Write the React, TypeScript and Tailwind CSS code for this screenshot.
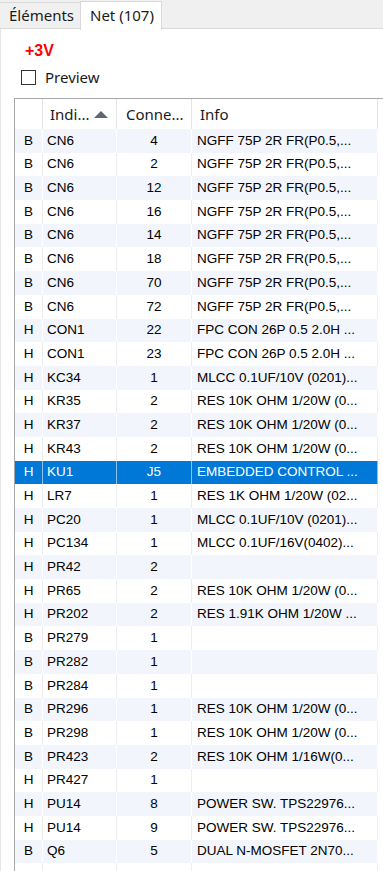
import React from "react";

type Row = [string, string, string, string];

const NGFF = "NGFF 75P 2R FR(P0.5,...";
const FPC = "FPC CON 26P 0.5 2.0H ...";
const RES10 = "RES 10K OHM 1/20W (0...";

const rows: Row[] = [
  ["B", "CN6", "4", NGFF],
  ["B", "CN6", "2", NGFF],
  ["B", "CN6", "12", NGFF],
  ["B", "CN6", "16", NGFF],
  ["B", "CN6", "14", NGFF],
  ["B", "CN6", "18", NGFF],
  ["B", "CN6", "70", NGFF],
  ["B", "CN6", "72", NGFF],
  ["H", "CON1", "22", FPC],
  ["H", "CON1", "23", FPC],
  ["H", "KC34", "1", "MLCC 0.1UF/10V (0201)..."],
  ["H", "KR35", "2", RES10],
  ["H", "KR37", "2", RES10],
  ["H", "KR43", "2", RES10],
  ["H", "KU1", "J5", "EMBEDDED CONTROL ..."],
  ["H", "LR7", "1", "RES 1K OHM 1/20W (02..."],
  ["H", "PC20", "1", "MLCC 0.1UF/10V (0201)..."],
  ["H", "PC134", "1", "MLCC 0.1UF/16V(0402)..."],
  ["H", "PR42", "2", ""],
  ["H", "PR65", "2", RES10],
  ["H", "PR202", "2", "RES 1.91K OHM 1/20W ..."],
  ["B", "PR279", "1", ""],
  ["B", "PR282", "1", ""],
  ["B", "PR284", "1", ""],
  ["B", "PR296", "1", RES10],
  ["B", "PR298", "1", RES10],
  ["B", "PR423", "2", "RES 10K OHM 1/16W(0..."],
  ["H", "PR427", "1", ""],
  ["H", "PU14", "8", "POWER SW. TPS22976..."],
  ["H", "PU14", "9", "POWER SW. TPS22976..."],
  ["B", "Q6", "5", "DUAL N-MOSFET 2N70..."],
  ["", "", "", ""],
];

const ui = { fontFamily: '"Noto Sans", sans-serif' };
const body = { fontFamily: '"Liberation Sans", Arial, sans-serif' };

export default function App() {
  return (
    <div className="w-[383px] h-[871px] overflow-hidden bg-white relative" style={ui}>
      {/* Tab strip */}
      <div className="h-[29px] bg-[#f0f0f0] border-b border-[#d9d9d9] flex items-end relative">
        <div className="h-[26px] w-[81px] border-t border-r border-[#d9d9d9] bg-[#f0f0f0] flex items-center pl-[9px] text-[15px] text-[#1a1a1a] leading-none">
          Éléments
        </div>
        <div className="absolute left-[80px] top-[1px] h-[29px] w-[82px] bg-white border-l border-r border-t border-[#d9d9d9] flex items-start pt-[4px] pl-[9px] text-[15px] text-[#1a1a1a] leading-[18px]">
          Net (107)
        </div>
      </div>

      {/* Content */}
      <div className="border-l border-[#e6e6e6] h-full">
        <div className="pl-[24px] pt-[13px] text-[16px] font-bold text-[#ff0000] leading-[17px]" style={body}>
          +3V
        </div>
        <div className="flex items-center pl-[20px] mt-[9px] h-[18px]">
          <div className="w-[15px] h-[15px] border border-[#333333] bg-white" />
          <span className="ml-[9px] text-[15px] text-[#1a1a1a] leading-[18px]">Preview</span>
        </div>

        {/* Table */}
        <div className="ml-[13px] mt-[12px] border-l border-t border-[#a8a8a8] w-[400px]">
          {/* Header */}
          <div className="flex h-[30px] bg-white text-[15px] text-[#1a1a1a]">
            <div className="w-[28px] border-r border-[#e5e5e5]" />
            <div className="w-[74px] border-r border-[#e5e5e5] flex items-center justify-between pl-[7px] pr-[8px]">
              <span>Indi...</span>
              <svg width="14" height="7" viewBox="0 0 14 7">
                <polygon points="0,7 7,0 14,7" fill="#5f6772" />
              </svg>
            </div>
            <div className="w-[75px] border-r border-[#e5e5e5] flex items-center pl-[9px]">Conne...</div>
            <div className="w-[186px] border-r border-[#e5e5e5] flex items-center pl-[8px]">Info</div>
            <div className="flex-1" />
          </div>

          {/* Rows */}
          <div style={body} className="text-[13.5px]">
            {rows.map((r, i) => {
              const selected = r[1] === "KU1";
              const striped = i % 2 === 0;
              const bg = selected ? "bg-[#0078d7] text-white" : striped ? "bg-[#f2f5fb] text-black" : "bg-white text-black";
              const line = selected ? "border-[#8fc0ea]" : striped ? "border-white" : "border-[#ededed]";
              return (
                <div key={i} className="flex h-[23.7px]">
                  <div className={`w-[28px] border-r ${line} ${bg} flex items-center justify-center`}>{r[0]}</div>
                  <div className={`w-[74px] border-r ${line} ${bg} flex items-center pl-[4px]`}>{r[1]}</div>
                  <div className={`w-[75px] border-r ${line} ${bg} flex items-center justify-center`}>{r[2]}</div>
                  <div className={`w-[186px] border-r ${line} ${bg} flex items-center pl-[5px] whitespace-nowrap overflow-hidden`}>{r[3]}</div>
                  <div className="flex-1 bg-white" />
                </div>
              );
            })}
          </div>
        </div>
      </div>
    </div>
  );
}
